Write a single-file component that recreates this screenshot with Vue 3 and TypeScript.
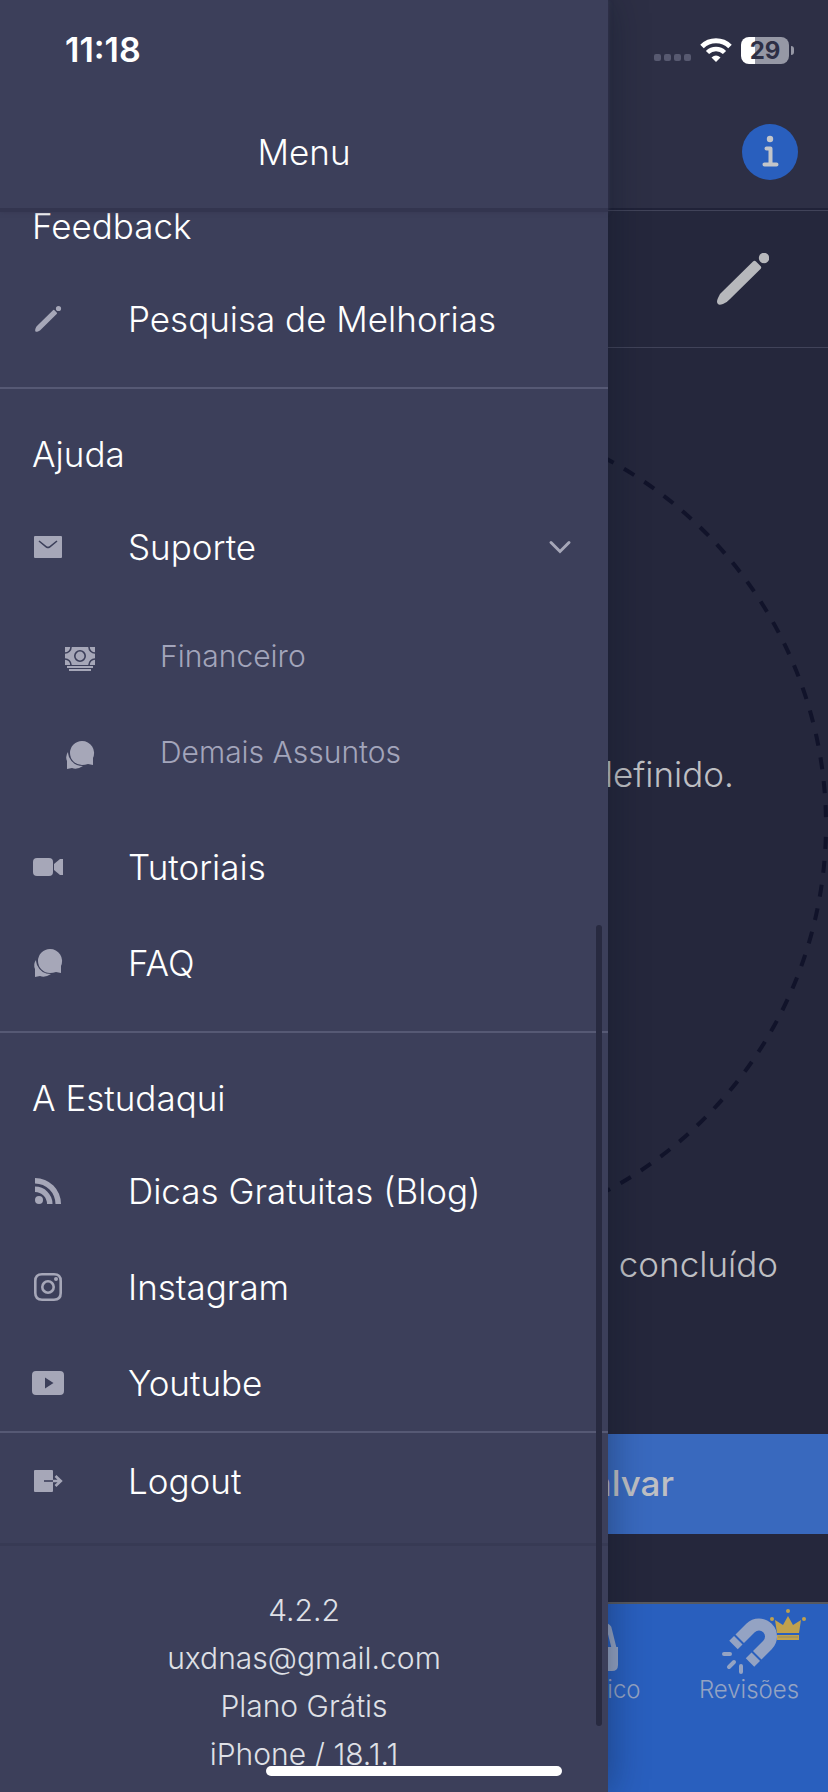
<script setup lang="ts">
import { ref } from 'vue'

type ShapeKind = 'fill' | 'line' | 'cut'
interface Shape {
  kind: ShapeKind
  d: string
}
interface Entry {
  label: string
  icon: string
  children?: Entry[]
}
interface Section {
  title: string
  entries: Entry[]
}

const icons: Record<string, Shape[]> = {
  pencil: [
    { kind: 'fill', d: 'M3.500 28.500Q2.700 27.500 3.500 25.500Q4 23.500 5.700 22.200L21 7.200Q21.700 6.500 22.500 7.200L24.700 9.500Q25.500 10.200 24.700 11L9.500 26Q8.200 27.500 6 28.500Q4 29.200 3.500 28.500Z' },
    { kind: 'fill', d: 'M26.500 2.900a2.600 2.600 0 1 1 0 5.200a2.600 2.600 0 1 1 0-5.200Z' },
  ],
  mail: [
    { kind: 'fill', d: 'M3 5H29Q30 5 30 6V26Q30 27 29 27H3Q2 27 2 26V6Q2 5 3 5Z' },
    { kind: 'cut', d: 'M7 10L14.500 16Q16 17 17.500 16L25 10' },
  ],
  cash: [
    { kind: 'fill', d: 'M1 4H31V22H1ZM3 23H29V25H3ZM5 26H27V28H5Z' },
    { kind: 'cut', d: 'M16 7.800a5.200 5.200 0 1 1 0 10.400a5.200 5.200 0 1 1 0-10.400ZM7 4a6 6 0 0 1-6 6M25 4a6 6 0 0 0 6 6M7 22a6 6 0 0 0-6-6M25 22a6 6 0 0 1 6-6' },
  ],
  chat: [
    { kind: 'fill', d: 'M4 13Q1 17 3 22V30L8 29Q13 31 19 27Q9 27 5 18Q4 15 4 13Z' },
    { kind: 'fill', d: 'M18 2A12 12 0 0 1 29 19L29 26L24 25Q21 26 18 26A12 12 0 0 1 18 2Z' },
  ],
  video: [
    { kind: 'fill', d: 'M5 7H17Q21 7 21 11V21Q21 25 17 25H5Q1 25 1 21V11Q1 7 5 7Z' },
    { kind: 'fill', d: 'M22 13L28 8H31V24H28L22 19Z' },
  ],
  rss: [
    { kind: 'fill', d: 'M3 3A26 26 0 0 1 29 29H23.500A20.500 20.500 0 0 0 3 8.500Z' },
    { kind: 'fill', d: 'M3 11.500A17.500 17.500 0 0 1 20.500 29H15A12 12 0 0 0 3 17Z' },
    { kind: 'fill', d: 'M7 21a4 4 0 1 1 0 8a4 4 0 1 1 0-8Z' },
  ],
  instagram: [
    { kind: 'line', d: 'M10 3.300H22Q28.700 3.300 28.700 10V22Q28.700 28.700 22 28.700H10Q3.300 28.700 3.300 22V10Q3.300 3.300 10 3.300Z' },
    { kind: 'line', d: 'M16 10.300a5.700 5.700 0 1 1 0 11.400a5.700 5.700 0 1 1 0-11.400Z' },
    { kind: 'fill', d: 'M24 6a2 2 0 1 1 0 4a2 2 0 1 1 0-4Z' },
  ],
  youtube: [
    { kind: 'fill', d: 'M4 4H28Q32 4 32 8V24Q32 28 28 28H4Q0 28 0 24V8Q0 4 4 4ZM13 10.500V21.500L21.500 16Z' },
  ],
  logout: [
    { kind: 'fill', d: 'M3 5H20Q21 5 21 6V26Q21 27 20 27H3Q2 27 2 26V6Q2 5 3 5Z' },
    { kind: 'cut', d: 'M12 16H21' },
    { kind: 'line', d: 'M21 16H28M23.500 11L28.800 16L23.500 21' },
  ],
}

const sections: Section[] = [
  { title: 'Feedback', entries: [{ label: 'Pesquisa de Melhorias', icon: 'pencil' }] },
  {
    title: 'Ajuda',
    entries: [
      {
        label: 'Suporte',
        icon: 'mail',
        children: [
          { label: 'Financeiro', icon: 'cash' },
          { label: 'Demais Assuntos', icon: 'chat' },
        ],
      },
      { label: 'Tutoriais', icon: 'video' },
      { label: 'FAQ', icon: 'chat' },
    ],
  },
  {
    title: 'A Estudaqui',
    entries: [
      { label: 'Dicas Gratuitas (Blog)', icon: 'rss' },
      { label: 'Instagram', icon: 'instagram' },
      { label: 'Youtube', icon: 'youtube' },
    ],
  },
]

const account = ['4.2.2', 'uxdnas@gmail.com', 'Plano Grátis', 'iPhone / 18.1.1']
const supportOpen = ref(true)
</script>

<template>
  <div class="app">
    <div class="page">
      <header class="page-header">
        <button class="plain" type="button" aria-label="Informações">
          <svg class="info" viewBox="0 0 56 56">
            <circle cx="28" cy="28" r="28" fill="#295fbe" />
            <circle cx="28" cy="15" r="3.200" fill="#c3c5c9" />
            <path d="M24.500 24.500H28.500V40M22.500 40.500H34.500" fill="none" stroke="#c3c5c9" stroke-width="4" stroke-linecap="round" stroke-linejoin="round" />
          </svg>
        </button>
      </header>
      <div class="toolbar">
        <button class="plain" type="button" aria-label="Editar">
          <svg class="edit" viewBox="0 0 52 52">
            <path d="M1 51Q-1 49 1 45Q2 41 5.500 38.500L36 8.500Q37.500 7 39 8.500L43.500 13Q45 14.500 43.500 16L13 46Q10.500 49 6 51Q2 52.500 1 51Z" fill="#b7b8bc" />
            <circle cx="47" cy="5" r="5.200" fill="#b7b8bc" />
          </svg>
        </button>
      </div>
      <main class="page-main">
        <div class="cycle">
          <svg class="ring" viewBox="0 0 828 828">
            <g fill="none" stroke="#11132a" stroke-width="4" stroke-dasharray="12 12">
              <path d="M826 414A415 415 0 0 0 411 -1" stroke-dashoffset="-8" />
              <path d="M826 414A415 415 0 0 1 411 829" stroke-dashoffset="-12" />
            </g>
          </svg>
          <p class="cycle-text">definido.</p>
        </div>
        <p class="done">concluído</p>
        <button class="save" type="button">Salvar</button>
      </main>
      <nav class="tabs">
        <a class="tab" href="#historico">
          <svg class="tab-icon" viewBox="0 0 60 60">
            <path d="M9 32L13 12Q14 9 18 9H42Q46 9 48 12L53 32" fill="none" stroke="#94a3c3" stroke-width="5" />
            <path d="M3 31H57V49Q57 55 51 55H9Q3 55 3 49Z" fill="#94a3c3" />
          </svg>
          <span>Histórico</span>
        </a>
        <a class="tab" href="#revisoes">
          <svg class="tab-icon" viewBox="0 0 60 60">
            <g fill="none" stroke="#94a3c3">
              <path d="M14.500 29L31.500 12A12 12 0 0 1 48.500 29L31 46.500" stroke-width="12" />
              <path d="M5 38H11M15 46L10 51M22 50V56" stroke-width="4" stroke-linecap="round" />
            </g>
            <path d="M15 18.500L25 28.500M32.500 35L42.500 45" stroke="#295fbe" stroke-width="2" />
          </svg>
          <svg class="crown" viewBox="0 0 36 32">
            <path d="M7 24L5 11L13 16L18 7L23 16L31 11L29 24ZM7 26H29V31H7Z" fill="#c0a14d" />
            <path d="M8 28H28" stroke="#8f8a68" stroke-width="1" />
            <circle cx="18" cy="2" r="2" fill="#c0a14d" />
            <circle cx="2" cy="10" r="2" fill="#c0a14d" />
            <circle cx="34" cy="10" r="2" fill="#c0a14d" />
          </svg>
          <span>Revisões</span>
        </a>
      </nav>
    </div>

    <aside class="drawer" aria-label="Menu">
      <header class="drawer-header"><h1>Menu</h1></header>
      <div class="drawer-scroll">
        <nav class="drawer-list">
          <section v-for="section in sections" :key="section.title" class="section">
            <h2>{{ section.title }}</h2>
            <template v-for="entry in section.entries" :key="entry.label">
              <button v-if="entry.children" class="row" type="button" :aria-expanded="supportOpen" @click="supportOpen = !supportOpen">
                <svg class="icon" viewBox="0 0 32 32">
                  <path v-for="shape in icons[entry.icon]" :key="shape.d" :class="shape.kind" :d="shape.d" />
                </svg>
                <span class="label">{{ entry.label }}</span>
                <svg class="icon" viewBox="0 0 32 32">
                  <path class="chevron" d="M7 11.500L16 20.500L25 11.500" />
                </svg>
              </button>
              <a v-else class="row" href="#">
                <svg class="icon" viewBox="0 0 32 32">
                  <path v-for="shape in icons[entry.icon]" :key="shape.d" :class="shape.kind" fill-rule="evenodd" :d="shape.d" />
                </svg>
                <span class="label">{{ entry.label }}</span>
              </a>
              <div v-if="entry.children && supportOpen" class="children">
                <a v-for="child in entry.children" :key="child.label" class="row child" href="#">
                  <svg class="icon" viewBox="0 0 32 32">
                    <path v-for="shape in icons[child.icon]" :key="shape.d" :class="shape.kind" :d="shape.d" />
                  </svg>
                  <span class="label">{{ child.label }}</span>
                </a>
              </div>
            </template>
          </section>
          <button class="row" type="button">
            <svg class="icon" viewBox="0 0 32 32">
              <path v-for="shape in icons.logout" :key="shape.d" :class="shape.kind" :d="shape.d" />
            </svg>
            <span class="label">Logout</span>
          </button>
        </nav>
        <footer class="account">
          <p v-for="line in account" :key="line">{{ line }}</p>
        </footer>
      </div>
      <div class="scrollbar"></div>
    </aside>

    <div class="status">
      <span class="clock">11:18</span>
      <div class="status-icons">
        <svg class="signal" viewBox="0 0 38 28">
          <g fill="#575970">
            <rect x="0" y="18" width="7" height="7" rx="2" />
            <rect x="10" y="18" width="7" height="7" rx="2" />
            <rect x="20" y="18" width="7" height="7" rx="2" />
            <rect x="30" y="18" width="7" height="7" rx="2" />
          </g>
        </svg>
        <svg class="wifi" viewBox="0 0 32 24">
          <path d="M2 8.500A20 20 0 0 1 30 8.500" fill="none" stroke="#fff" stroke-width="5" />
          <path d="M7.500 14.500A12 12 0 0 1 24.500 14.500" fill="none" stroke="#fff" stroke-width="4.500" />
          <path d="M16 24L11.500 19.500Q16 15.500 20.500 19.500Z" fill="#fff" />
        </svg>
        <div class="battery"><span>29</span></div>
        <span class="nub"></span>
      </div>
    </div>
    <div class="home-bar"></div>
  </div>
</template>

<style>
body {
  margin: 0;
  background: #25273c;
}
</style>

<style scoped>
.app {
  position: relative;
  min-height: 100vh;
  overflow: hidden;
  font-family: Inter, 'Open Sans', sans-serif;
  font-size: 35px;
  font-weight: 300;
  line-height: 42px;
  color: #fff;
}
h1,
h2,
p {
  margin: 0;
  font-size: inherit;
  font-weight: inherit;
}
svg {
  display: block;
}
button {
  margin: 0;
  padding: 0;
  border: 0;
  background: none;
  color: inherit;
  font: inherit;
}
a {
  color: inherit;
  text-decoration: none;
}

.page {
  display: flex;
  flex-direction: column;
  min-height: 100vh;
  color: #bebfc3;
}
.page-header {
  display: flex;
  align-items: center;
  justify-content: flex-end;
  height: 112px;
  padding: 96px 30px 0 0;
  background: #2d2f45;
  border-bottom: 2px solid #202238;
}
.info {
  width: 56px;
  height: 56px;
}
.toolbar {
  display: flex;
  align-items: center;
  justify-content: flex-end;
  height: 136px;
  padding-right: 59px;
  border-top: 1px solid #414359;
  border-bottom: 1px solid #414359;
}
.edit {
  width: 52px;
  height: 52px;
}
.page-main {
  padding-top: 63px;
}
.cycle {
  display: grid;
}
.ring,
.cycle-text {
  grid-area: 1 / 1;
}
.ring {
  width: 100%;
}
.cycle-text {
  align-self: center;
  padding: 0 94px 102px 0;
  text-align: right;
}
.done {
  padding: 4px 50px 0 0;
  text-align: right;
}
.save {
  display: block;
  width: 100%;
  height: 100px;
  margin-top: 149px;
  padding: 0 154px 2px 0;
  background: #3969be;
  text-align: right;
  font-weight: 500;
}
.tabs {
  display: flex;
  justify-content: flex-end;
  flex: 1;
  margin-top: 68px;
  border-top: 2px solid #57595f;
  background: #295fbe;
  color: #94a3c3;
  font-size: 24px;
  line-height: 28px;
}
.tab {
  position: relative;
  display: flex;
  flex-direction: column;
  align-items: center;
  width: 158px;
  padding-top: 12px;
}
.tab-icon {
  width: 60px;
  height: 60px;
}
.crown {
  position: absolute;
  top: 5px;
  right: 22px;
  width: 36px;
  height: 32px;
}

.drawer {
  position: absolute;
  inset: 0 auto 0 0;
  display: flex;
  flex-direction: column;
  isolation: isolate;
  width: min(608px, 80vw);
  background: #3c3f5a;
  box-shadow: 0 0 36px rgba(8, 20, 32, 0.4);
}
.drawer-header {
  position: relative;
  z-index: 1;
  display: flex;
  align-items: center;
  justify-content: center;
  flex-shrink: 0;
  height: 112px;
  padding-top: 96px;
  background: #3c3f5a;
  border-bottom: 4px solid #33354f;
  box-shadow: 0 0 4px #363852;
}
.drawer-scroll {
  flex: 1;
  min-height: 0;
}
.drawer-list {
  margin-top: -51px;
  padding-bottom: 14px;
  border-bottom: 3px solid #373a54;
}
.section {
  padding-bottom: 20px;
  border-bottom: 2px solid #565974;
}
.section:last-of-type {
  padding-bottom: 0;
}
h2 {
  padding: 44px 32px 24px;
}
.row {
  display: flex;
  align-items: center;
  box-sizing: border-box;
  width: 100%;
  height: 96px;
  padding: 0 32px;
  text-align: left;
}
.label {
  flex: 1;
  margin-left: 64px;
}
.icon {
  width: 32px;
  height: 32px;
}
.fill {
  fill: #a6a7b8;
}
.line {
  fill: none;
  stroke: #a6a7b8;
  stroke-width: 2.600;
}
.cut {
  fill: none;
  stroke: #3c3f5a;
  stroke-width: 1.600;
}
.chevron {
  fill: none;
  stroke: #a6a7b8;
  stroke-width: 3;
  stroke-linecap: round;
}
.children {
  padding: 16px 0;
}
.child {
  padding-left: 64px;
  color: #a3a5bb;
  font-size: 30px;
}
.child .label {
  padding-bottom: 6px;
}
.account {
  padding-top: 40px;
  text-align: center;
  font-size: 30px;
  line-height: 48px;
  color: #dfe0e6;
}
.scrollbar {
  position: absolute;
  top: 925px;
  right: 6px;
  bottom: 66px;
  width: 6px;
  border-radius: 3px;
  background: #282a40;
}

.status {
  position: absolute;
  inset: 0 0 auto;
  display: flex;
  align-items: center;
  justify-content: space-between;
  height: 100px;
  padding: 0 34px 0 65px;
  font-weight: 600;
}
.clock {
  font-size: 34px;
}
.status-icons {
  display: flex;
  align-items: center;
}
.signal {
  width: 38px;
  height: 28px;
}
.wifi {
  width: 32px;
  height: 24px;
  margin: 0 9px 0 8px;
}
.battery {
  width: 48px;
  height: 27px;
  border-radius: 8px;
  background: linear-gradient(to right, #fff 14px, #9698a5 14px);
  color: #2d2f45;
  font-size: 24px;
  font-weight: 700;
  line-height: 27px;
  text-align: center;
}
.nub {
  width: 3px;
  height: 9px;
  margin-left: 2px;
  border-radius: 0 4px 4px 0;
  background: #9698a5;
}
.home-bar {
  position: absolute;
  bottom: 16px;
  left: 50%;
  width: 296px;
  height: 10px;
  margin-left: -148px;
  border-radius: 5px;
  background: #fff;
}
</style>
